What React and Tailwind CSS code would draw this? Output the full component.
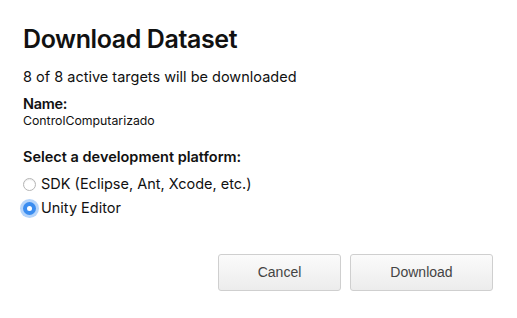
import { useState } from 'react';

export default function App() {
  const [platform, setPlatform] = useState('unity');

  return (
    <div className="w-[517px] h-[318px] bg-white pl-[23px] pr-[24px] pt-[22px] text-[#111]" style={{ fontFamily: 'Inter, "Liberation Sans", sans-serif' }}>
      <h1 className="text-[25px] font-semibold leading-[34px] tracking-[-0.4px]">Download Dataset</h1>

      <p className="mt-[12px] text-[14.5px] leading-[18px]">8 of 8 active targets will be downloaded</p>

      <div className="mt-[9px]">
        <div className="text-[14.5px] font-semibold leading-[18px] tracking-[-0.3px]">Name:</div>
        <div className="text-[12.3px] leading-[16px]">ControlComputarizado</div>
      </div>

      <div className="mt-[19px] text-[14.5px] font-semibold leading-[18px]">Select a development platform:</div>

      <div className="mt-[9px] flex flex-col gap-[6px]">
        {[
          { id: 'sdk', label: 'SDK (Eclipse, Ant, Xcode, etc.)' },
          { id: 'unity', label: 'Unity Editor' },
        ].map(o => (
          <label key={o.id} className="flex items-center gap-[5px] text-[14.5px] leading-[18px] cursor-pointer" onClick={() => setPlatform(o.id)}>
            {platform === o.id ? (
              <span className="w-[13px] h-[13px] rounded-full bg-[#3b8df0] flex items-center justify-center shadow-[0_0_0_3px_rgba(90,160,245,0.45)]">
                <span className="w-[5px] h-[5px] rounded-full bg-white" />
              </span>
            ) : (
              <span className="w-[13px] h-[13px] rounded-full border border-[#b5b5b5] bg-white shadow-[inset_0_1px_1px_rgba(0,0,0,0.08)]" />
            )}
            <span>{o.label}</span>
          </label>
        ))}
      </div>

      <div className="mt-[37px] flex justify-end gap-[9px]">
        <button className="w-[123px] h-[37px] rounded-[3px] border border-[#cfcfcf] bg-gradient-to-b from-[#fbfbfb] to-[#ececec] text-[14px] text-[#444]" style={{ fontFamily: '"Liberation Sans", sans-serif' }}>Cancel</button>
        <button className="w-[143px] h-[37px] rounded-[3px] border border-[#cfcfcf] bg-gradient-to-b from-[#fbfbfb] to-[#ececec] text-[14px] text-[#444]" style={{ fontFamily: '"Liberation Sans", sans-serif' }}>Download</button>
      </div>
    </div>
  );
}
